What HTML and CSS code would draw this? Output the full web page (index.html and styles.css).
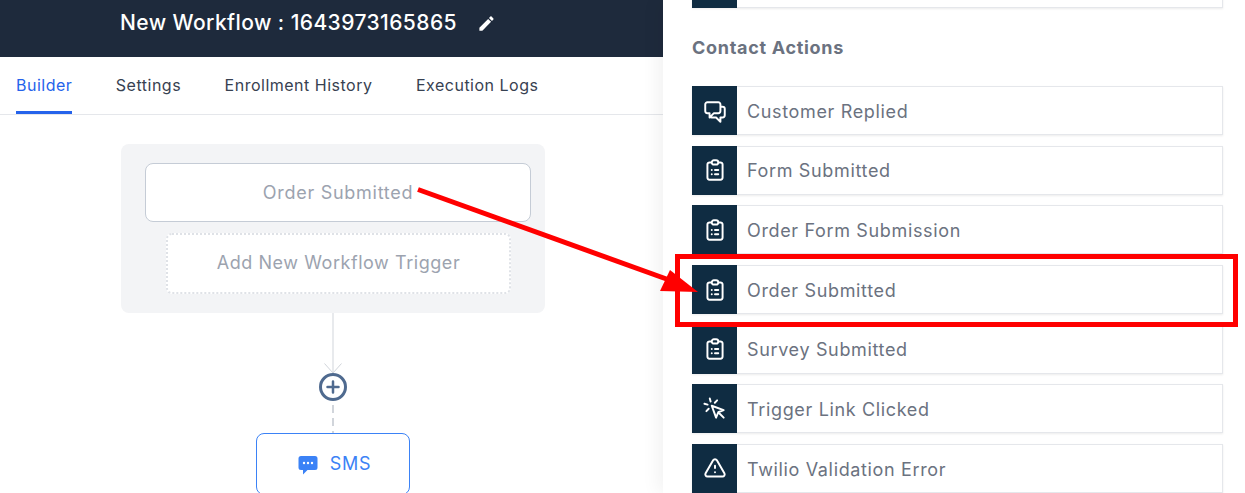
FILE: index.html
```html
<!DOCTYPE html>
<html lang="en">
<head>
<meta charset="utf-8">
<title>New Workflow</title>
<link rel="stylesheet" href="styles.css">
</head>
<body>
<svg class="defs" width="0" height="0" aria-hidden="true">
  <symbol id="i-clip" viewBox="0 0 24 24"><path d="M9 5H7a2 2 0 00-2 2v12a2 2 0 002 2h10a2 2 0 002-2V7a2 2 0 00-2-2h-2M9 5a2 2 0 002 2h2a2 2 0 002-2M9 5a2 2 0 012-2h2a2 2 0 012 2m-3 7h3m-3 4h3m-6-4h.01M9 16h.01"/></symbol>
  <symbol id="i-chat" viewBox="0 0 24 24"><path d="M17 8h2a2 2 0 012 2v6a2 2 0 01-2 2h-2v4l-4-4H9a1.994 1.994 0 01-1.414-.586m0 0L11 14h4a2 2 0 002-2V6a2 2 0 00-2-2H5a2 2 0 00-2 2v6a2 2 0 002 2h2v4l.586-.586z"/></symbol>
  <symbol id="i-click" viewBox="0 0 24 24"><path d="M15 15l-2 5L9 9l11 4-5 2zm0 0l5 5M7.188 2.239l.777 2.897M5.136 7.965l-2.898-.777M13.95 4.05l-2.122 2.122m-5.657 5.656l-2.12 2.122"/></symbol>
  <symbol id="i-warn" viewBox="0 0 24 24"><path d="M12 9v2m0 4h.01m-6.938 4h13.856c1.54 0 2.502-1.667 1.732-3L13.732 4c-.77-1.333-2.694-1.333-3.464 0L3.34 16c-.77 1.333.192 3 1.732 3z"/></symbol>
</svg>

<div class="app">
  <main class="main">
    <header class="topbar">
      <h1 class="title">New Workflow : 1643973165865</h1>
      <svg class="pencil" viewBox="0 0 24 24"><path d="M3 17.25V21h3.75L17.81 9.94l-3.75-3.75L3 17.25zM20.71 7.04c.39-.39.39-1.02 0-1.41l-2.34-2.34c-.39-.39-1.02-.39-1.41 0l-1.83 1.83 3.75 3.75 1.83-1.83z"/></svg>
    </header>
    <nav class="tabs">
      <a class="tab tab-active">Builder</a>
      <a class="tab">Settings</a>
      <a class="tab">Enrollment History</a>
      <a class="tab">Execution Logs</a>
    </nav>
    <section class="canvas">
      <div class="flow">
        <div class="triggers">
          <div class="trigger">Order Submitted</div>
          <div class="add-trigger">Add New Workflow Trigger</div>
        </div>
        <svg class="connector" viewBox="0 0 30 120" width="30" height="120">
          <path class="conn-line" d="M15 0V60M6.500 50.500L15 60L23.500 50.500"/>
          <circle class="plus-ring" cx="15" cy="74" r="12.500"/>
          <path class="plus-mark" d="M15 68.500V79.500M9.500 74H20.500"/>
          <path class="conn-dash" d="M15 92V120"/>
        </svg>
        <div class="action">
          <svg class="sms-icon" viewBox="0 0 20 20"><path d="M3 1h14a2.500 2.500 0 012.500 2.500v9A2.500 2.500 0 0117 15H9.500L5 19.500V15H3A2.500 2.500 0 01.500 12.500v-9A2.500 2.500 0 013 1z"/><circle class="dot" cx="6" cy="8" r="1.200"/><circle class="dot" cx="10" cy="8" r="1.200"/><circle class="dot" cx="14" cy="8" r="1.200"/></svg>
          <span>SMS</span>
        </div>
      </div>
    </section>
  </main>

  <aside class="panel">
    <div class="card card-cut"><span class="card-icon"></span></div>
    <h2 class="group">Contact Actions</h2>
    <ul class="list">
      <li class="card"><span class="card-icon"><svg class="ico"><use href="#i-chat"/></svg></span><span class="card-text">Customer Replied</span></li>
      <li class="card"><span class="card-icon"><svg class="ico"><use href="#i-clip"/></svg></span><span class="card-text">Form Submitted</span></li>
      <li class="card"><span class="card-icon"><svg class="ico"><use href="#i-clip"/></svg></span><span class="card-text">Order Form Submission</span></li>
      <li class="card"><span class="card-icon"><svg class="ico"><use href="#i-clip"/></svg></span><span class="card-text">Order Submitted</span></li>
      <li class="card"><span class="card-icon"><svg class="ico"><use href="#i-clip"/></svg></span><span class="card-text">Survey Submitted</span></li>
      <li class="card"><span class="card-icon"><svg class="ico"><use href="#i-click"/></svg></span><span class="card-text">Trigger Link Clicked</span></li>
      <li class="card"><span class="card-icon"><svg class="ico"><use href="#i-warn"/></svg></span><span class="card-text">Twilio Validation Error</span></li>
    </ul>
  </aside>
</div>

<svg class="annotation" viewBox="0 0 1245 493" width="1245" height="493" aria-hidden="true">
  <rect class="anno-box" x="677.500" y="256.500" width="558" height="68"/>
  <path class="anno-line" d="M418 189.500L672 281"/>
  <path class="anno-head" d="M698 292L670 270L660 291Z"/>
</svg>
</body>
</html>
```

FILE: styles.css
```css
* { box-sizing: border-box; }

html, body {
  margin: 0;
  height: 493px;
  overflow: hidden;
  background: #fff;
  font-family: Inter, "Liberation Sans", sans-serif;
}

.defs { position: absolute; }

.app {
  display: flex;
  height: 493px;
  overflow: hidden;
}

/* left side */
.main {
  width: 663px;
  flex: none;
  display: flex;
  flex-direction: column;
}

.topbar {
  height: 57px;
  flex: none;
  background: #1e2a3c;
  display: flex;
  align-items: flex-start;
  padding: 10px 0 0 120px;
  gap: 20px;
}

.title {
  margin: 0;
  font-size: 21px;
  line-height: 25px;
  font-weight: 500;
  letter-spacing: 0.42px;
  color: #fff;
}

.pencil {
  width: 19px;
  height: 19px;
  flex: none;
  margin-top: 4px;
  fill: #fff;
}

.tabs {
  height: 58px;
  flex: none;
  display: flex;
  gap: 43.500px;
  padding-left: 16px;
  border-bottom: 1px solid #e5e7eb;
}

.tab {
  height: 57px;
  display: flex;
  align-items: center;
  padding-top: 1px;
  font-size: 16px;
  letter-spacing: 0.5px;
  color: #374151;
  border-bottom: 3px solid transparent;
}

.tab-active {
  color: #2563eb;
  border-bottom-color: #2563eb;
}

.canvas {
  flex: none;
  padding: 29px 0 0 121px;
  background: #fff;
}

.flow {
  width: 424px;
  display: flex;
  flex-direction: column;
  align-items: center;
}

.triggers {
  width: 424px;
  height: 169px;
  flex: none;
  background: #f3f4f6;
  border-radius: 8px;
  padding-top: 19px;
  display: flex;
  flex-direction: column;
  align-items: center;
}

.trigger {
  width: 386px;
  height: 59px;
  flex: none;
  margin-left: 10px;
  background: #fff;
  border: 1px solid #c5ccd6;
  border-radius: 8px;
  display: flex;
  align-items: center;
  justify-content: center;
  font-size: 18px;
  letter-spacing: 0.73px;
  color: #9ca3af;
}

.add-trigger {
  width: 345px;
  height: 61px;
  flex: none;
  margin-top: 11px;
  margin-left: 11px;
  padding-bottom: 2px;
  background: #fff;
  border: 2px dotted #dfe2e7;
  border-radius: 6px;
  display: flex;
  align-items: center;
  justify-content: center;
  font-size: 18px;
  letter-spacing: 0.55px;
  color: #9ca3af;
}

.connector {
  display: block;
  flex: none;
  fill: none;
}

.conn-line { stroke: #d1d5db; stroke-width: 1; }
.conn-dash { stroke: #d1d5db; stroke-width: 2; stroke-dasharray: 8 5; }
.plus-ring { stroke: #4f6a8f; stroke-width: 3; fill: #fff; }
.plus-mark { stroke: #4f6a8f; stroke-width: 2.500; stroke-linecap: round; }

.action {
  width: 154px;
  height: 62px;
  flex: none;
  border: 1px solid #3b82f6;
  border-radius: 8px;
  background: #fff;
  display: flex;
  align-items: center;
  justify-content: center;
  gap: 12px;
  padding: 0 0 2px 3px;
  font-size: 18px;
  letter-spacing: 0.7px;
  color: #3b82f6;
}

.sms-icon {
  width: 20px;
  height: 20px;
  margin-top: 3px;
  fill: #3b82f6;
}

.sms-icon .dot { fill: #fff; }

/* right panel */
.panel {
  flex: 1;
  position: relative;
  background: #fff;
  padding-left: 29px;
  box-shadow: -6px 0 16px rgba(0, 0, 0, 0.05);
}

.group {
  margin: 28px 0 26px;
  height: 24px;
  font-size: 18px;
  line-height: 24px;
  font-weight: 700;
  letter-spacing: 0.7px;
  color: #6b7280;
}

.list {
  list-style: none;
  margin: 0;
  padding: 0;
  display: flex;
  flex-direction: column;
  gap: 10.680px;
}

.card {
  width: 531px;
  height: 49px;
  display: flex;
  align-items: center;
  background: #fff;
  border: 1px solid #e5e7eb;
  border-left: 0;
  box-shadow: 0 1px 2px rgba(0, 0, 0, 0.08);
  flex: none;
}

.card-cut {
  margin-top: -41px;
}

.card-icon {
  width: 45px;
  height: 49px;
  flex: none;
  margin: -1px 0;
  background: #0f2c42;
  display: flex;
  align-items: center;
  justify-content: center;
}

.ico {
  width: 26px;
  height: 26px;
  fill: none;
  stroke: #fff;
  stroke-width: 1.800;
  stroke-linecap: round;
  stroke-linejoin: round;
}

.card-text {
  margin-left: 10px;
  padding-top: 1px;
  font-size: 18px;
  letter-spacing: 0.65px;
  color: #6b7280;
}

/* red annotation drawn over the screenshot */
.annotation {
  position: absolute;
  left: 0;
  top: 0;
  pointer-events: none;
}

.anno-box { fill: none; stroke: #ff0000; stroke-width: 5; }
.anno-line { fill: none; stroke: #ff0000; stroke-width: 5; }
.anno-head { fill: #ff0000; }
```
